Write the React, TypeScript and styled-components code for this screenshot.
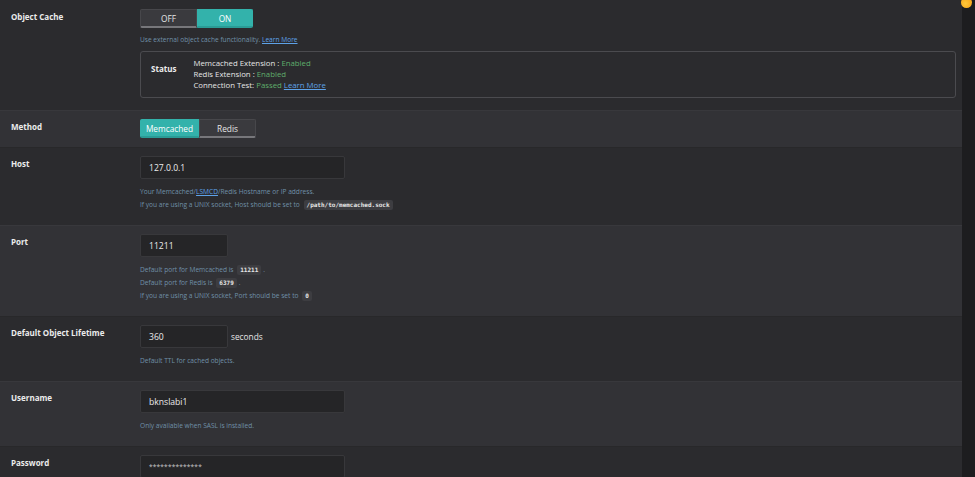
import React from "react";
import styled, { createGlobalStyle } from "styled-components";

const GlobalStyle = createGlobalStyle`
  html, body {
    margin: 0;
    padding: 0;
    background: #2b2b2e;
    font-family: "Open Sans", "Noto Sans", sans-serif;
    overflow: hidden;
  }
`;

const Page = styled.div`
  display: flex;
  width: 975px;
  height: 477px;
  overflow: hidden;
`;

const Main = styled.div`
  flex: 1;
  display: flex;
  flex-direction: column;
`;

const Scrollbar = styled.div`
  position: relative;
  width: 13px;
  background: #1d1d1f;
`;

const Dot = styled.div`
  position: absolute;
  left: -1px;
  top: -3px;
  width: 11px;
  height: 11px;
  border-radius: 50%;
  background: radial-gradient(circle at 40% 60%, #ffc83a, #f59a10);
`;

const Row = styled.div<{ $alt?: boolean; $first?: boolean; $bottom?: number }>`
  display: grid;
  grid-template-columns: 140px 1fr;
  padding: ${(p) => (p.$first ? "9px" : "8px")} 6px ${(p) => p.$bottom ?? 14}px 0;
  background: ${(p) => (p.$alt ? "#323236" : "#2b2b2e")};
  border-top: ${(p) => (p.$first ? "none" : `1px solid ${p.$alt ? "#38383c" : "#28282a"}`)};
`;

const Label = styled.div`
  padding: 2px 0 0 11px;
  font-size: 8px;
  font-weight: 700;
  color: #ececec;
`;

const Field = styled.div`
  display: flex;
  flex-direction: column;
  align-items: flex-start;
`;

const Segmented = styled.div`
  display: flex;
  height: 19px;
`;

const Segment = styled.button<{ $on?: boolean; $w: number }>`
  width: ${(p) => p.$w}px;
  height: 19px;
  padding: 0;
  font-family: inherit;
  font-size: 8.3px;
  color: ${(p) => (p.$on ? "#ffffff" : "#e6e6e6")};
  background: ${(p) => (p.$on ? "#33b2ab" : "#3a3a3e")};
  border: 1px solid ${(p) => (p.$on ? "#33b2ab" : "#47474b")};
  border-bottom: 2px solid ${(p) => (p.$on ? "#2a9c96" : "#77777b")};
  cursor: pointer;
  &:first-child {
    border-radius: 2px 0 0 2px;
  }
  &:last-child {
    border-radius: 0 2px 2px 0;
  }
`;

const Help = styled.div<{ $gap?: number }>`
  margin-top: ${(p) => p.$gap ?? 6}px;
  display: flex;
  flex-direction: column;
`;

const HelpLine = styled.div`
  height: 13px;
  line-height: 13px;
  font-size: 6.6px;
  color: #7090a8;
  white-space: nowrap;
`;

const A = styled.a`
  color: #5ea2e8;
  text-decoration: underline;
`;

const Code = styled.code`
  display: inline-block;
  margin: 0 2px;
  padding: 0 3px;
  line-height: 10px;
  font-family: "DejaVu Sans Mono", monospace;
  font-size: 6px;
  font-weight: 700;
  color: #e6e6e6;
  background: #3d3d41;
  border-radius: 2px;
`;

const StatusBox = styled.div`
  align-self: stretch;
  margin-top: 5px;
  display: flex;
  gap: 17px;
  padding: 6px 10px;
  border: 1px solid #4b4b4f;
  border-radius: 3px;
`;

const StatusTitle = styled.div`
  padding-top: 5px;
  font-size: 8px;
  font-weight: 700;
  color: #ececec;
`;

const StatusLines = styled.div`
  display: flex;
  flex-direction: column;
`;

const StatusLine = styled.div`
  line-height: 11px;
  font-size: 7.8px;
  color: #e6e6e6;
`;

const Ok = styled.span`
  color: #5fae6c;
`;

const InputRow = styled.div`
  display: flex;
  align-items: center;
  gap: 3px;
`;

const Input = styled.div<{ $w: number; $secret?: boolean }>`
  width: ${(p) => p.$w}px;
  height: 23px;
  box-sizing: border-box;
  padding-left: 8px;
  display: flex;
  align-items: center;
  background: #252527;
  border: 1px solid #38383b;
  border-radius: 2px;
  font-size: ${(p) => (p.$secret ? "6.5px" : "8.6px")};
  letter-spacing: ${(p) => (p.$secret ? "0.2px" : "0")};
  color: ${(p) => (p.$secret ? "#c8c8c8" : "#ececec")};
`;

const Unit = styled.span`
  font-size: 8.3px;
  color: #e6e6e6;
`;

const App: React.FC = () => {
  return (
    <Page>
      <GlobalStyle />
      <Main>
        <Row $first $bottom={12}>
          <Label>Object Cache</Label>
          <Field>
            <Segmented>
              <Segment $w={57}>OFF</Segment>
              <Segment $w={56} $on>
                ON
              </Segment>
            </Segmented>
            <Help $gap={5}>
              <HelpLine>
                Use external object cache functionality. <A href="#">Learn More</A>
              </HelpLine>
            </Help>
            <StatusBox>
              <StatusTitle>Status</StatusTitle>
              <StatusLines>
                <StatusLine>
                  Memcached Extension : <Ok>Enabled</Ok>
                </StatusLine>
                <StatusLine>
                  Redis Extension : <Ok>Enabled</Ok>
                </StatusLine>
                <StatusLine>
                  Connection Test: <Ok>Passed</Ok> <A href="#">Learn More</A>
                </StatusLine>
              </StatusLines>
            </StatusBox>
          </Field>
        </Row>

        <Row $alt $bottom={9}>
          <Label>Method</Label>
          <Field>
            <Segmented>
              <Segment $w={59} $on>
                Memcached
              </Segment>
              <Segment $w={57}>Redis</Segment>
            </Segmented>
          </Field>
        </Row>

        <Row>
          <Label>Host</Label>
          <Field>
            <Input $w={205}>127.0.0.1</Input>
            <Help>
              <HelpLine>
                Your Memcached/<A href="#">LSMCD</A>/Redis Hostname or IP address.
              </HelpLine>
              <HelpLine>
                If you are using a UNIX socket, Host should be set to <Code>/path/to/memcached.sock</Code>
              </HelpLine>
            </Help>
          </Field>
        </Row>

        <Row $alt>
          <Label>Port</Label>
          <Field>
            <Input $w={88}>11211</Input>
            <Help>
              <HelpLine>
                Default port for Memcached is <Code>11211</Code>.
              </HelpLine>
              <HelpLine>
                Default port for Redis is <Code>6379</Code>.
              </HelpLine>
              <HelpLine>
                If you are using a UNIX socket, Port should be set to <Code>0</Code>
              </HelpLine>
            </Help>
          </Field>
        </Row>

        <Row>
          <Label>Default Object Lifetime</Label>
          <Field>
            <InputRow>
              <Input $w={88}>360</Input>
              <Unit>seconds</Unit>
            </InputRow>
            <Help>
              <HelpLine>Default TTL for cached objects.</HelpLine>
            </Help>
          </Field>
        </Row>

        <Row $alt>
          <Label>Username</Label>
          <Field>
            <Input $w={205}>bknslabi1</Input>
            <Help>
              <HelpLine>Only available when SASL is installed.</HelpLine>
            </Help>
          </Field>
        </Row>

        <Row>
          <Label>Password</Label>
          <Field>
            <Input $w={205} $secret>
              **************
            </Input>
          </Field>
        </Row>
      </Main>
      <Scrollbar>
        <Dot />
      </Scrollbar>
    </Page>
  );
};

export default App;
